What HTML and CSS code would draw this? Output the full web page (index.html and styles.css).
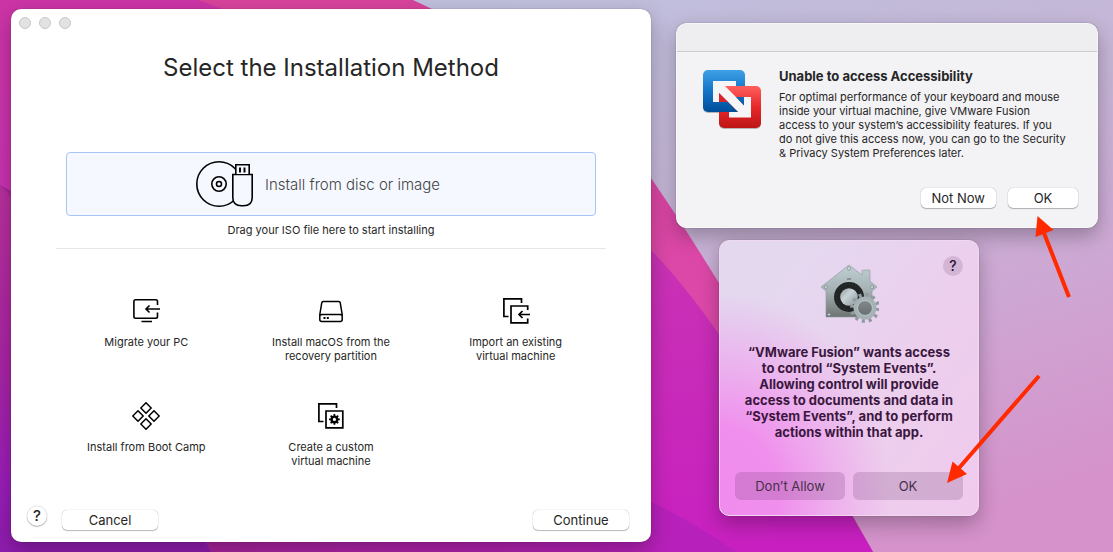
FILE: index.html
```html
<!DOCTYPE html>
<html lang="en">
<head>
<meta charset="utf-8">
<meta name="viewport" content="width=device-width, initial-scale=1">
<title>Select the Installation Method</title>
<link rel="stylesheet" href="styles.css">
</head>
<body>
<div class="desktop">
  <svg class="wallpaper" viewBox="0 0 1113 552" preserveAspectRatio="none" aria-hidden="true">
    <defs>
      <linearGradient id="sky" x1="0.45" y1="0" x2="1" y2="0.85">
        <stop offset="0" stop-color="#bfbfdd"/><stop offset="0.4" stop-color="#c6b5d6"/><stop offset="0.7" stop-color="#cea6d3"/><stop offset="1" stop-color="#d592cb"/>
      </linearGradient>
      <linearGradient id="pink" x1="0" y1="0" x2="0" y2="1">
        <stop offset="0" stop-color="#d8439c"/><stop offset="0.6" stop-color="#dc49aa"/><stop offset="1" stop-color="#c63bb0"/>
      </linearGradient>
      <linearGradient id="magenta" x1="0" y1="0" x2="0" y2="1">
        <stop offset="0" stop-color="#cc34a6"/><stop offset="0.45" stop-color="#c832b4"/><stop offset="1" stop-color="#c820c0"/>
      </linearGradient>
      <linearGradient id="violet" x1="0" y1="0" x2="0" y2="1">
        <stop offset="0" stop-color="#b8309c"/><stop offset="0.5" stop-color="#a824a4"/><stop offset="0.8" stop-color="#9a1eb8"/><stop offset="1" stop-color="#8f1cae"/>
      </linearGradient>
      <linearGradient id="dusk" gradientUnits="userSpaceOnUse" x1="211" y1="0" x2="700" y2="0">
        <stop offset="0" stop-color="#a8249e"/><stop offset="1" stop-color="#b820bc"/>
      </linearGradient>
    </defs>
    <rect width="1113" height="552" fill="url(#sky)"/>
    <path d="M0 0H413C520 50 610 110 651 178C735 300 810 440 873 552H0Z" fill="url(#pink)"/>
    <path d="M0 0H198C400 70 570 170 651 250C690 291 715 328 740 365C800 450 835 500 862 552H0Z" fill="url(#magenta)"/>
    <path d="M719 332C770 400 830 475 873 552H780L719 400Z" fill="#c820c0"/>
    <path d="M0 185C120 250 420 380 651 502C690 520 715 538 737 552H0Z" fill="url(#dusk)"/>
    <path d="M0 185C80 270 150 440 211 552H0Z" fill="url(#violet)"/>
  </svg>

  <main class="window installer">
    <div class="lights" aria-hidden="true"><span></span><span></span><span></span></div>
    <h1 class="title">Select the Installation Method</h1>

    <button class="drop" type="button">
      <svg width="58" height="48" viewBox="0 0 58 48" fill="none" stroke="#000" stroke-width="1.6" aria-hidden="true">
        <circle cx="23" cy="24" r="22.2"/><circle cx="23" cy="24" r="7.2"/><circle cx="23" cy="24" r="2.5"/>
        <path d="M36.800 14.500H56.200V37.500Q56.200 45.800 47.500 45.800H45.500Q36.800 45.800 36.800 37.500Z" fill="#f5f8ff"/>
        <path d="M39.800 14V4.800H53.200V14" fill="#f5f8ff"/>
        <path d="M44 7.500V12.500M48.500 7.500V12.500" stroke-width="2"/>
      </svg>
      <span>Install from disc or image</span>
    </button>
    <p class="hint">Drag your ISO file here to start installing</p>
    <hr class="divider">

    <div class="options">
      <button class="option" type="button">
        <svg width="28" height="28" viewBox="0 0 28 28" fill="none" stroke="#000" stroke-width="1.6" aria-hidden="true">
          <path d="M25.500 8V4.500Q25.500 2.800 23.800 2.800H3.600Q1.900 2.800 1.900 4.500V19.600Q1.900 21.300 3.600 21.300H23.800Q25.500 21.300 25.500 19.600V15.500M28 12H14M17.500 8.500L14 12L17.500 15.500M9.500 24.500H20"/>
        </svg>
        <span>Migrate your PC</span>
      </button>
      <button class="option" type="button">
        <svg width="28" height="28" viewBox="0 0 28 28" fill="none" stroke="#000" stroke-width="1.500" aria-hidden="true">
          <path d="M2.800 17.500L4.800 5.600Q5 4.500 6.200 4.500H21.800Q23 4.500 23.200 5.600L25.200 17.500V22.500Q25.200 24.500 23.200 24.500H4.800Q2.800 24.500 2.800 22.500ZM3 18.500Q3.500 17.500 5 17.500H23Q24.500 17.500 25 18.500"/>
          <path d="M6.500 21H8.500M9.800 21H11.800" stroke-width="2"/>
        </svg>
        <span>Install macOS from the<br>recovery partition</span>
      </button>
      <button class="option" type="button">
        <svg width="28" height="28" viewBox="0 0 28 28" fill="none" stroke="#000" stroke-width="1.700" aria-hidden="true">
          <path d="M6.500 19.500H1.900V1.900H19.500V6M25.700 13V9H9V25.800H25.700V21.500M28 17.500H17M20.500 14L17 17.500L20.500 21"/>
        </svg>
        <span>Import an existing<br>virtual machine</span>
      </button>
      <button class="option" type="button">
        <svg width="28" height="28" viewBox="0 0 28 28" fill="none" stroke="#000" stroke-width="1.500" stroke-linejoin="round" aria-hidden="true">
          <path d="M14 .8L19.200 6L14 11.200L8.800 6ZM6 8.800L11.200 14L6 19.200L.8 14ZM22 8.800L27.200 14L22 19.200L16.800 14ZM14 16.800L19.200 22L14 27.200L8.800 22Z"/>
        </svg>
        <span>Install from Boot Camp</span>
      </button>
      <button class="option" type="button">
        <svg width="28" height="28" viewBox="0 0 28 28" fill="none" stroke="#000" stroke-width="1.700" aria-hidden="true">
          <path d="M6.500 19.500H1.900V1.900H19.500V6M9 9H25.800V25.800H9Z"/>
          <circle cx="17.400" cy="17.400" r="2.800" stroke-width="2.400"/>
          <path d="M17.400 12V14M17.400 20.800V22.800M12 17.400H14M20.800 17.400H22.800M13.600 13.600L15 15M19.800 19.800L21.200 21.200M21.200 13.600L19.800 15M15 19.800L13.600 21.200"/>
        </svg>
        <span>Create a custom<br>virtual machine</span>
      </button>
    </div>

    <footer class="footer">
      <button class="help" type="button" aria-label="Help">?</button>
      <button class="btn wide" type="button">Cancel</button>
      <button class="btn wide last" type="button">Continue</button>
    </footer>
  </main>

  <div class="side">
    <section class="window alert" role="alertdialog" aria-labelledby="alert-title">
      <div class="alert-bar"></div>
      <div class="alert-body">
        <svg class="fusion" width="60" height="62" viewBox="702 68 60 62" aria-hidden="true">
          <defs>
            <linearGradient id="blue" gradientUnits="userSpaceOnUse" x1="0" y1="70" x2="0" y2="112"><stop offset="0" stop-color="#3ea0e6"/><stop offset=".5" stop-color="#1474c8"/><stop offset="1" stop-color="#004d98"/></linearGradient>
            <linearGradient id="red" gradientUnits="userSpaceOnUse" x1="0" y1="86" x2="0" y2="128"><stop offset="0" stop-color="#ff5f5c"/><stop offset=".5" stop-color="#e6282c"/><stop offset="1" stop-color="#bd1616"/></linearGradient>
          </defs>
          <rect x="703" y="71" width="42" height="42" rx="5" fill="#777" opacity=".5"/>
          <rect x="719" y="87" width="42" height="42" rx="5" fill="#777" opacity=".5"/>
          <rect x="703" y="70" width="42" height="42" rx="5" fill="url(#blue)"/>
          <rect x="719" y="86" width="42" height="42" rx="5" fill="url(#red)"/>
          <path d="M713 81H736V86H725L736 97L744 105.500V97H751V117.500H729V112H738L719 93V102H713Z" fill="#f5f5f8"/>
          <path d="M736 97H744V105.500ZM719 102H728L738 112H719Z" fill="url(#blue)"/>
          <path d="M719 93L728 102H719Z" fill="#d8262c"/>
        </svg>
        <div class="alert-copy">
          <h2 id="alert-title">Unable to access Accessibility</h2>
          <p>For optimal performance of your keyboard and mouse<br>inside your virtual machine, give VMware Fusion<br>access to your system’s accessibility features. If you<br>do not give this access now, you can go to the Security<br>&amp; Privacy System Preferences later.</p>
        </div>
      </div>
      <div class="alert-actions">
        <button class="btn" type="button">Not Now</button>
        <button class="btn ok" type="button">OK</button>
      </div>
    </section>

    <section class="window consent" role="alertdialog" aria-labelledby="consent-title">
      <button class="consent-help" type="button" aria-label="Help">?</button>
      <svg class="security" width="60" height="62" viewBox="819 263 60 62" aria-hidden="true">
        <defs>
          <linearGradient id="steel" x1="0" y1="0" x2="0" y2="1"><stop offset="0" stop-color="#c0d0d4"/><stop offset=".5" stop-color="#a5b0b2"/><stop offset="1" stop-color="#6d7372"/></linearGradient>
          <linearGradient id="knob" x1="0" y1="0" x2="1" y2="1"><stop offset="0" stop-color="#8c9798"/><stop offset=".4" stop-color="#c7d3d7"/><stop offset="1" stop-color="#899498"/></linearGradient>
          <linearGradient id="hole" x1="0" y1="0" x2="0" y2="1"><stop offset="0" stop-color="#848d8e"/><stop offset="1" stop-color="#666c6c"/></linearGradient>
        </defs>
        <path d="M849 265L862 275V271Q862 270 863 270H869Q870 270 870 271V281L877 287L872 291V317H826V291L821 287Z" fill="url(#steel)" stroke="#8c989b" stroke-width=".6"/>
        <g fill="#d3e0e2" stroke="#7e888a" stroke-width=".7"><circle cx="849" cy="268.500" r="1.700"/><circle cx="826" cy="287" r="1.500"/><circle cx="872" cy="287" r="1.500"/><circle cx="829" cy="314.500" r="1.300"/></g>
        <path d="M847 279H851" stroke="#758083" stroke-width="1.500"/>
        <circle cx="849" cy="297" r="15" fill="#202425"/>
        <circle cx="849" cy="297" r="12.800" fill="none" stroke="#3a3e3f" stroke-width="1" stroke-dasharray="1 2"/>
        <circle cx="849" cy="297" r="8.800" fill="url(#knob)"/>
        <circle cx="865" cy="308" r="13" fill="none" stroke="#8f9b9e" stroke-width="4" stroke-dasharray="3 3.807"/>
        <circle cx="865" cy="308" r="9.500" fill="url(#hole)" stroke="#a5b1b4" stroke-width="4"/>
        <circle cx="865" cy="308" r="7.400" fill="none" stroke="#d2dcdd" stroke-width=".7"/>
      </svg>
      <h2 id="consent-title">“VMware Fusion” wants access<br>to control “System Events”.<br>Allowing control will provide<br>access to documents and data in<br>“System Events”, and to perform<br>actions within that app.</h2>
      <div class="consent-actions">
        <button type="button">Don’t Allow</button>
        <button type="button">OK</button>
      </div>
    </section>
  </div>

  <svg class="arrows" width="180" height="280" viewBox="940 210 180 280" aria-hidden="true">
    <g fill="#ff2a00" stroke="#ff2a00">
      <path d="M1069 297L1044 233M1039 376L959 468" stroke-width="4"/>
      <path d="M1037.500 216L1053.500 230L1035.500 237ZM947 483L952.500 461.500L967 474Z" stroke="none"/>
    </g>
  </svg>
</div>
</body>
</html>
```

FILE: styles.css
```css
* {
  box-sizing: border-box;
}

body,
h1,
h2,
p {
  margin: 0;
}

body,
button {
  font-family: Inter, "Liberation Sans", sans-serif;
  color: #262626;
}

button {
  border: 0;
  padding: 0;
  background: none;
}

svg {
  flex: none;
}

.desktop {
  position: relative;
  display: grid;
  grid-template-columns: minmax(0, 640fr) minmax(0, 422fr);
  gap: 25px;
  min-height: 100vh;
  padding: 9px 15px 10px 11px;
  overflow: hidden;
}

.wallpaper {
  position: absolute;
  inset: 0;
  width: 100%;
  height: 100%;
}

.window {
  position: relative;
  border-radius: 10px;
  box-shadow: 0 0 1px rgba(0, 0, 0, 0.5), 0 8px 20px rgba(0, 0, 0, 0.28);
}

.installer {
  display: flex;
  flex-direction: column;
  background: #fff;
}

.lights {
  display: flex;
  gap: 8px;
  padding: 8px 8px 0;
}

.lights span {
  width: 12px;
  height: 12px;
  border: 1px solid #c8c8c8;
  border-radius: 50%;
  background: #e2e2e2;
}

.title {
  margin-top: 23px;
  font-size: 24px;
  line-height: 32px;
  font-weight: 400;
  text-align: center;
}

.drop {
  display: flex;
  align-items: center;
  justify-content: center;
  gap: 11px;
  height: 64px;
  margin: 68px 55px 0;
  padding-right: 26px;
  border: 1px solid #a5c6fb;
  border-radius: 4px;
  background: #f5f8ff;
  font-size: 15px;
  font-weight: 300;
  color: #444;
}

.hint {
  margin-top: 7px;
  font-size: 11px;
  line-height: 14px;
  text-align: center;
}

.divider {
  width: auto;
  height: 1px;
  margin: 11px 45px 0;
  border: 0;
  background: #e6e6e6;
}

.options {
  display: grid;
  grid-template-columns: repeat(3, minmax(0, 1fr));
  row-gap: 39px;
  padding: 48px 43px 0;
}

.option {
  display: flex;
  flex-direction: column;
  align-items: center;
  gap: 10px;
  font-size: 11px;
  line-height: 14px;
}

.footer {
  display: flex;
  align-items: flex-end;
  gap: 15px;
  margin-top: auto;
  padding: 0 22px 12px 16px;
}

.help {
  width: 20px;
  height: 20px;
  margin-bottom: 4px;
  border-radius: 50%;
  background: #fff;
  box-shadow: 0 0 1px rgba(0, 0, 0, 0.4), 0 1px 1px rgba(0, 0, 0, 0.25);
  font-size: 15px;
  line-height: 20px;
  font-weight: 500;
}

.btn {
  height: 20px;
  padding: 0 11px;
  border-radius: 5px;
  background: #fff;
  box-shadow: 0 0 1px rgba(0, 0, 0, 0.4), 0 1px 1px rgba(0, 0, 0, 0.25);
  font-size: 13px;
  line-height: 20px;
}

.wide {
  width: 96px;
}

.last {
  margin-left: auto;
}

.side {
  display: flex;
  flex-direction: column;
  align-items: flex-start;
  gap: 12px;
  padding-top: 14px;
}

.alert {
  width: 100%;
  border: 1px solid #f7f6f8;
  background: #f3f2f5;
  overflow: hidden;
}

.alert-bar {
  height: 28px;
  border-bottom: 1px solid #cccbce;
  background: #eeedf0;
}

.alert-body {
  display: flex;
  gap: 17px;
  padding: 16px 20px 0 25px;
}

.alert-copy h2 {
  font-size: 13px;
  line-height: 16px;
  font-weight: 700;
}

.alert-copy p {
  margin-top: 6px;
  font-size: 11px;
  line-height: 14px;
  white-space: nowrap;
}

.alert-actions {
  display: flex;
  justify-content: flex-end;
  gap: 12px;
  padding: 28px 19px 19px;
}

.ok {
  width: 70px;
}

.consent {
  display: flex;
  flex-direction: column;
  align-items: center;
  width: 260px;
  margin-left: 43px;
  padding: 22px 15px 15px;
  border: 1px solid #f0d8f0;
  background:
    radial-gradient(ellipse 170px 210px at 0 95%, #f08cee 0, #f08fed 35%, rgba(240, 148, 237, 0.6) 62%, rgba(240, 170, 237, 0) 100%),
    linear-gradient(125deg, #e4d8ef 20%, #eccfed 60%, #f0caed 100%);
}

.consent-help {
  position: absolute;
  top: 15px;
  right: 15px;
  width: 20px;
  height: 20px;
  border-radius: 50%;
  background: #d3b5d5;
  color: #2b1030;
  font-size: 14px;
  line-height: 20px;
  font-weight: 500;
}

.consent h2 {
  margin-top: 19px;
  font-size: 13px;
  line-height: 16px;
  font-weight: 700;
  text-align: center;
  white-space: nowrap;
  color: #3b173f;
}

.consent-actions {
  display: grid;
  grid-template-columns: 1fr 1fr;
  gap: 8px;
  width: 100%;
  margin-top: 32px;
}

.consent-actions button {
  height: 28px;
  border-radius: 6px;
  background: rgba(100, 50, 105, 0.2);
  font-size: 13px;
  color: #47304a;
}

.arrows {
  position: absolute;
  top: 210px;
  right: -7px;
  pointer-events: none;
}
```
